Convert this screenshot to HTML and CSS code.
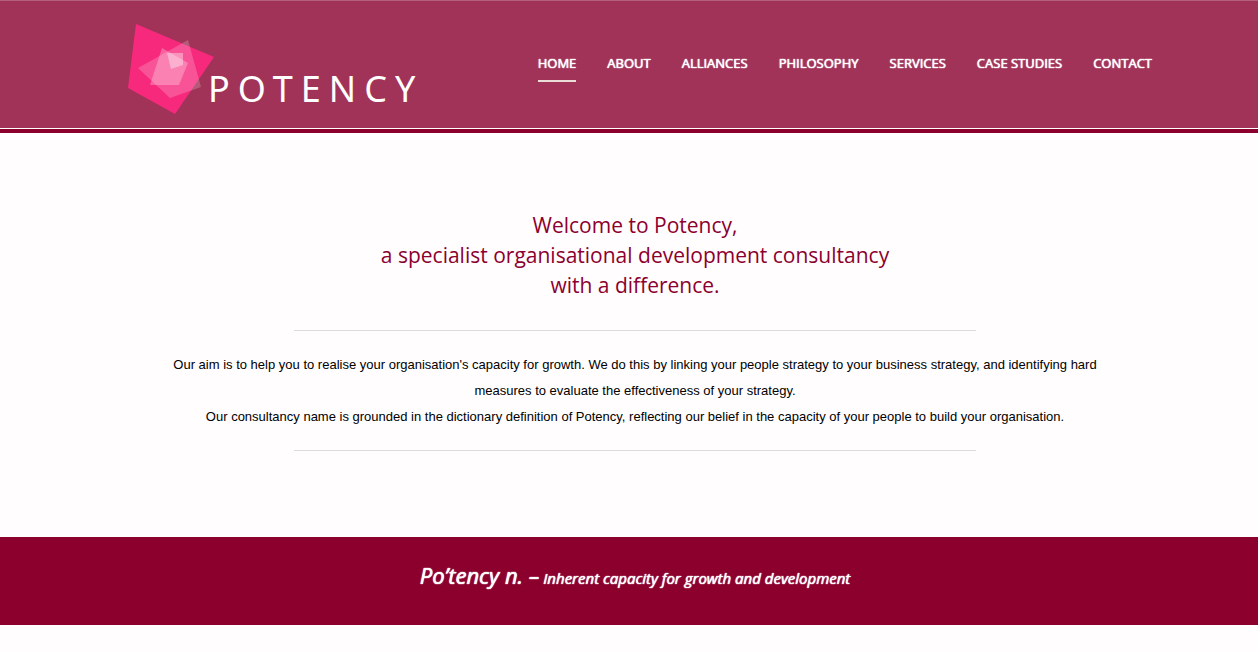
FILE: index.html
```html
<!DOCTYPE html>
<html lang="en">
<head>
<meta charset="utf-8">
<title>Potency</title>
<link rel="stylesheet" href="styles.css">
</head>
<body>
<header class="site-header">
  <div class="header-inner">
    <a class="logo" href="#" aria-label="Potency home">
      <svg class="logo-mark" viewBox="0 0 88 94" aria-hidden="true">
        <path fill="#f7297c" d="M8 1 86 34 47 91 0 65Z"/>
        <path fill="#fff" fill-opacity=".2" d="M60 17 73 64 42 75 10 45Z"/>
        <path fill="#fff" fill-opacity=".27" d="M34 25 60 40 51 62H22Z"/>
        <path fill="#fff" fill-opacity=".37" d="M39 30H55V42L43 46Z"/>
      </svg>
      <span class="logo-text">POTENCY</span>
    </a>
    <nav class="main-nav" aria-label="Main">
      <a class="nav-link active" href="#" aria-current="page">HOME</a>
      <a class="nav-link" href="#">ABOUT</a>
      <a class="nav-link" href="#">ALLIANCES</a>
      <a class="nav-link" href="#">PHILOSOPHY</a>
      <a class="nav-link" href="#">SERVICES</a>
      <a class="nav-link" href="#">CASE STUDIES</a>
      <a class="nav-link" href="#">CONTACT</a>
    </nav>
  </div>
</header>
<main>
  <section class="intro">
    <h1 class="headline">Welcome to Potency,<br>a specialist organisational development consultancy<br>with a difference.</h1>
    <hr class="rule">
    <p class="copy">Our aim is to help you to realise your organisation's capacity for growth. We do this by linking your people strategy to your business strategy, and identifying hard measures to evaluate the effectiveness of your strategy.</p>
    <p class="copy">Our consultancy name is grounded in the dictionary definition of Potency, reflecting our belief in the capacity of your people to build your organisation.</p>
    <hr class="rule">
  </section>
  <section class="definition">
    <p class="definition-text"><span class="term">Po’tency n. –</span> Inherent capacity for growth and development</p>
  </section>
</main>
</body>
</html>
```
FILE: styles.css
```css
* {
  box-sizing: border-box;
}

body {
  margin: 0;
  background: #fffdfe;
  color: #000;
  font-family: "Open Sans", sans-serif;
}

.site-header {
  background: #a23358;
  border-top: 1px solid #b5607d;
  border-bottom: 4px solid #8c002e;
  box-shadow: inset 0 -1px #fff;
}

.header-inner {
  display: flex;
  justify-content: space-between;
  max-width: 1046px;
  margin: 0 auto;
  padding: 22px 0 12px 22px;
}

.logo {
  display: flex;
  color: #fff;
  text-decoration: none;
}

.logo-mark {
  width: 88px;
  height: 94px;
}

.logo-text {
  margin: 40px 0 0 -8px;
  font-family: "Noto Sans", sans-serif;
  font-size: 36px;
  line-height: 52px;
  letter-spacing: 8px;
}

.main-nav {
  display: flex;
  align-items: flex-start;
  gap: 31px;
  padding-top: 30px;
}

.nav-link {
  padding-bottom: 7px;
  border-bottom: 2px solid transparent;
  color: #fff;
  font-size: 13px;
  line-height: 20px;
  text-decoration: none;
  text-shadow: 0 0 1px #fff, 0 0 1px #fff;
  white-space: nowrap;
}

.nav-link.active {
  border-color: #eadfd8;
}

.intro {
  max-width: 970px;
  margin: 0 auto;
  padding: 77px 6px 86px 18px;
  text-align: center;
}

.headline {
  margin: 0 0 30px;
  color: #8c002e;
  font-size: 21px;
  font-weight: 400;
  line-height: 30px;
}

.rule {
  width: 72%;
  height: 1px;
  margin: 0 auto;
  border: 0;
  background: #dcdadb;
}

.copy {
  margin: 0;
  font-family: "Liberation Sans", Arial, sans-serif;
  font-size: 13px;
  line-height: 26px;
}

.rule + .copy {
  margin-top: 21px;
}

.copy + .rule {
  margin-top: 20px;
}

.definition {
  padding: 20px 0 29px 12px;
  background: #8c002e;
  color: #fff;
  text-align: center;
}

.definition-text {
  margin: 0;
  font-size: 15px;
  font-style: italic;
  line-height: 36px;
  text-shadow: 0 0 1px #fff, 0 0 1px #fff;
}

.term {
  font-size: 22px;
}
```
